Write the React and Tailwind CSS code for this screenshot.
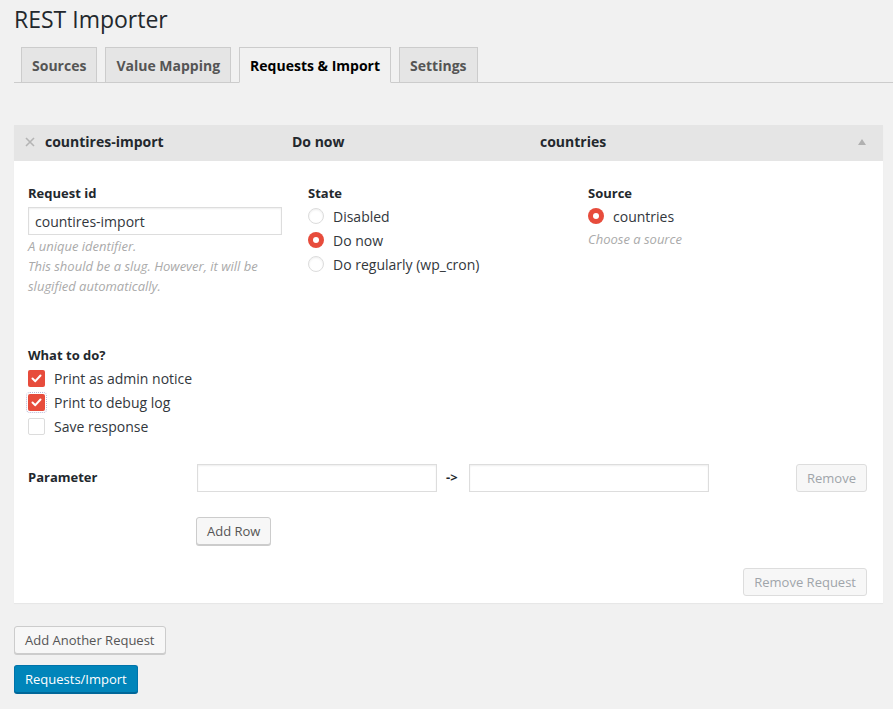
import { useState } from "react";

const font = { fontFamily: '"Open Sans", "DejaVu Sans", sans-serif' };

function Radio({ checked, label }) {
  return (
    <label className="flex h-[24px] items-center gap-[9px] text-[14px] text-[#32373c]">
      {checked ? (
        <span className="flex h-[16px] w-[16px] items-center justify-center rounded-full bg-[#e74c3c]">
          <span className="h-[6px] w-[6px] rounded-full bg-white" />
        </span>
      ) : (
        <span className="h-[16px] w-[16px] rounded-full border border-[#dcdcdc] bg-white shadow-[inset_0_1px_2px_rgba(0,0,0,0.07)]" />
      )}
      {label}
    </label>
  );
}

function Checkbox({ checked, focused, label }) {
  return (
    <label className="flex h-[24px] items-center gap-[9px] text-[14px] text-[#32373c]">
      <span
        className={
          "flex h-[17px] w-[17px] items-center justify-center rounded-[2px] " +
          (checked ? "bg-[#e74c3c]" : "border border-[#dcdcdc] bg-white") +
          (focused ? " outline outline-1 outline-dotted outline-offset-1 outline-[#b9b9d6]" : "")
        }
      >
        {checked && (
          <svg width="11" height="9" viewBox="0 0 11 9" fill="none">
            <path d="M1.5 4.5 L4.3 7.2 L9.5 1.5" stroke="white" strokeWidth="2" strokeLinecap="round" strokeLinejoin="round" />
          </svg>
        )}
      </span>
      {label}
    </label>
  );
}

function Button({ children, disabled, className = "" }) {
  return (
    <button
      className={
        "h-[28px] rounded-[3px] border px-[10px] text-[13px] leading-[26px] " +
        (disabled
          ? "border-[#dddddd] bg-[#f7f7f7] text-[#a0a5aa]"
          : "border-[#cccccc] bg-[#f7f7f7] text-[#555555] shadow-[0_1px_0_#cccccc]") +
        " " +
        className
      }
    >
      {children}
    </button>
  );
}

export default function App() {
  const [tab] = useState("Requests & Import");
  const tabs = ["Sources", "Value Mapping", "Requests & Import", "Settings"];

  return (
    <div className="min-h-screen bg-[#f1f1f1] pb-[16px] pt-[4px]" style={font}>
      <h1 className="pl-[14px] text-[23px] leading-[31px] text-[#23282d]">REST Importer</h1>

      {/* tabs */}
      <div className="ml-[14px] mt-[12px] flex gap-[8px] border-b border-[#cccccc] pl-[7px]">
        {tabs.map((t) => (
          <div
            key={t}
            className={
              "-mb-px flex h-[36px] items-center border px-[10px] text-[14px] font-bold " +
              (t === tab
                ? "border-[#cccccc] border-b-[#f1f1f1] bg-[#f1f1f1] text-black"
                : "border-[#cccccc] bg-[#e5e5e5] text-[#555555]")
            }
          >
            {t}
          </div>
        ))}
      </div>

      {/* request panel */}
      <div className="ml-[14px] mr-[10px] mt-[42px] bg-white shadow-[0_1px_1px_rgba(0,0,0,0.04)]">
        <div className="flex h-[36px] items-center bg-[#e5e5e5] pb-[3px] text-[14px] font-bold text-[#23282d]">
          <span className="flex w-[31px] pl-[11px]">
            <svg width="10" height="10" viewBox="0 0 10 10">
              <path d="M1 1 L9 9 M9 1 L1 9" stroke="#b4b4b4" strokeWidth="1.6" />
            </svg>
          </span>
          <span className="w-[247px]">countires-import</span>
          <span className="w-[248px]">Do now</span>
          <span className="flex-1">countries</span>
          <svg className="mr-[17px]" width="8" height="6" viewBox="0 0 8 6">
            <path d="M4 0 L8 6 L0 6 Z" fill="#b0b0b0" />
          </svg>
        </div>

        <div className="pb-[7px] pl-[14px] pr-[16px] pt-[22px]">
          <div className="flex">
            <div className="w-[280px]">
              <div className="text-[13px] font-bold leading-[20px] text-[#23282d]">Request id</div>
              <input
                readOnly
                value="countires-import"
                className="mt-[4px] h-[28px] w-[254px] border border-[#dddddd] px-[6px] text-[14px] text-[#32373c] shadow-[inset_0_1px_2px_rgba(0,0,0,0.07)] outline-none"
              />
              <p className="mt-[1px] text-[13px] italic leading-[20px] text-[#aaaaaa]">
                A unique identifier.
                <br />
                This should be a slug. However, it will be
                <br />
                slugified automatically.
              </p>
            </div>
            <div className="w-[280px]">
              <div className="text-[13px] font-bold leading-[20px] text-[#23282d]">State</div>
              <div className="mt-[1px]">
                <Radio label="Disabled" />
                <Radio checked label="Do now" />
                <Radio label="Do regularly (wp_cron)" />
              </div>
            </div>
            <div>
              <div className="text-[13px] font-bold leading-[20px] text-[#23282d]">Source</div>
              <div className="mt-[1px]">
                <Radio checked label="countries" />
              </div>
              <p className="mt-[1px] text-[13px] italic leading-[20px] text-[#aaaaaa]">Choose a source</p>
            </div>
          </div>

          <div className="mt-[49px]">
            <div className="text-[13px] font-bold leading-[20px] text-[#23282d]">What to do?</div>
            <div className="mt-[1px]">
              <Checkbox checked label="Print as admin notice" />
              <Checkbox checked focused label="Print to debug log" />
              <Checkbox label="Save response" />
            </div>
          </div>

          <div className="mt-[26px] flex items-center">
            <div className="w-[169px] text-[13px] font-bold text-[#23282d]">Parameter</div>
            <input className="h-[28px] w-[240px] border border-[#dddddd] shadow-[inset_0_1px_2px_rgba(0,0,0,0.07)] outline-none" />
            <span className="w-[32px] pl-[9px] text-[13px] font-bold text-[#23282d]">-&gt;</span>
            <input className="h-[28px] w-[240px] border border-[#dddddd] shadow-[inset_0_1px_2px_rgba(0,0,0,0.07)] outline-none" />
            <div className="flex flex-1 justify-end">
              <Button disabled>Remove</Button>
            </div>
          </div>

          <div className="mt-[25px] pl-[168px]">
            <Button>Add Row</Button>
          </div>

          <div className="mt-[23px] flex justify-end">
            <Button disabled>Remove Request</Button>
          </div>
        </div>
      </div>

      <div className="ml-[14px] mt-[23px] flex flex-col items-start gap-[11px]">
        <Button>Add Another Request</Button>
        <button className="h-[28px] rounded-[3px] border border-[#0073aa] border-b-[#006799] bg-[#0085ba] px-[10px] text-[13px] leading-[26px] text-white shadow-[0_1px_0_#006799]">
          Requests/Import
        </button>
      </div>
    </div>
  );
}
